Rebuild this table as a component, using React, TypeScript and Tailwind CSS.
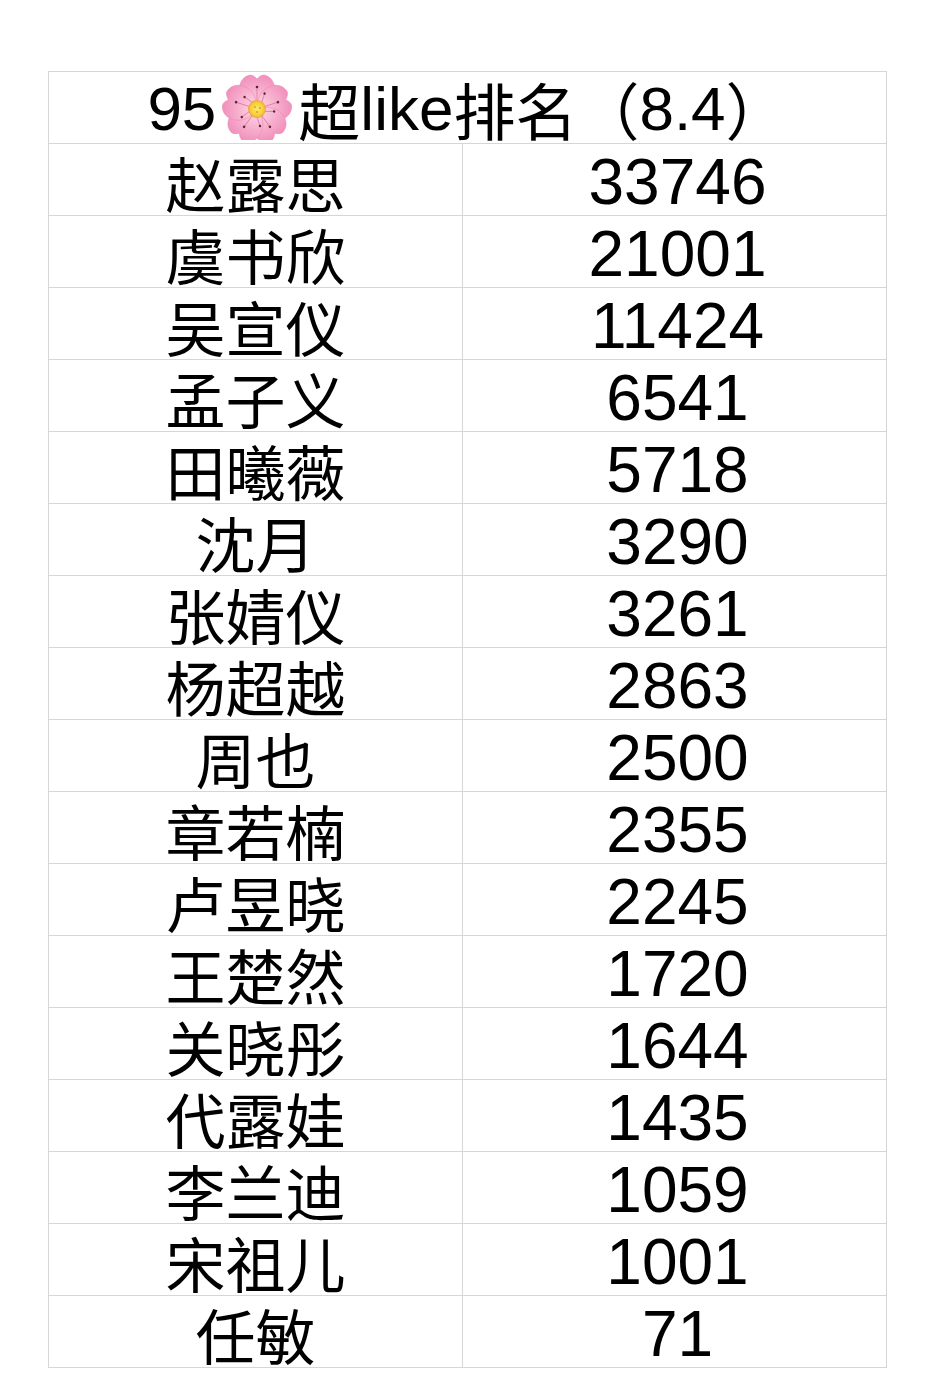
import React from "react";

const rows: [string, string][] = [
  ["赵露思", "33746"],
  ["虞书欣", "21001"],
  ["吴宣仪", "11424"],
  ["孟子义", "6541"],
  ["田曦薇", "5718"],
  ["沈月", "3290"],
  ["张婧仪", "3261"],
  ["杨超越", "2863"],
  ["周也", "2500"],
  ["章若楠", "2355"],
  ["卢昱晓", "2245"],
  ["王楚然", "1720"],
  ["关晓彤", "1644"],
  ["代露娃", "1435"],
  ["李兰迪", "1059"],
  ["宋祖儿", "1001"],
  ["任敏", "71"],
];

function Blossom() {
  const petals = [0, 72, 144, 216, 288];
  return (
    <svg width="76" height="66" viewBox="-38 -35 76 66" className="block">
      <defs>
        <radialGradient id="pg" cx="0" cy="0" r="36" gradientUnits="userSpaceOnUse">
          <stop offset="0%" stopColor="#fde0ec" />
          <stop offset="45%" stopColor="#f8b7d2" />
          <stop offset="100%" stopColor="#f08cba" />
        </radialGradient>
        <radialGradient id="cg" cx="0" cy="0" r="9" gradientUnits="userSpaceOnUse">
          <stop offset="0%" stopColor="#fbe96a" />
          <stop offset="70%" stopColor="#f6cf3a" />
          <stop offset="100%" stopColor="#eea23a" />
        </radialGradient>
      </defs>
      {petals.map((a) => (
        <g key={a} transform={`rotate(${a})`}>
          <path
            d="M0 0 C -22 -6 -22 -31 -7 -34 C -4 -34 -2 -32 0 -30 C 2 -32 4 -34 7 -34 C 22 -31 22 -6 0 0 Z"
            fill="url(#pg)"
            stroke="#ee8ab6"
            strokeWidth="0.6"
          />
        </g>
      ))}
      {petals.map((a) => (
        <g key={"s" + a} transform={`rotate(${a + 36})`}>
          <path d="M0 -8 L-3 -17" stroke="#e36b9a" strokeWidth="0.7" />
          <circle cx="-3" cy="-17" r="1.2" fill="#5a2333" />
        </g>
      ))}
      {petals.map((a) => (
        <g key={"t" + a} transform={`rotate(${a})`}>
          <path d="M0 -8 L0 -22" stroke="#e36b9a" strokeWidth="0.7" />
          <circle cx="0" cy="-22" r="1.3" fill="#5a2333" />
        </g>
      ))}
      <circle cx="0" cy="0" r="9" fill="url(#cg)" />
      <circle cx="-2" cy="-2" r="1" fill="#e9962e" />
      <circle cx="3" cy="-1" r="1" fill="#e9962e" />
      <circle cx="0" cy="3" r="1" fill="#e9962e" />
    </svg>
  );
}

export default function App() {
  return (
    <div className="w-[934px] h-[1381px] bg-white pt-[71px] pl-[48px]">
      <table
        className="border-collapse w-[838px] text-black"
        style={{ tableLayout: "fixed" }}
      >
        <colgroup>
          <col className="w-[414px]" />
          <col className="w-[424px]" />
        </colgroup>
        <tbody>
          <tr className="h-[72px]">
            <td
              colSpan={2}
              className="border border-[#d6d6d6] p-0 pt-[4px] text-center align-top text-[62px] leading-[66px] font-['Liberation_Sans','Noto_Sans_CJK_SC',sans-serif] whitespace-nowrap"
            >
              <span className="inline-flex items-center h-[66px]">
                <span>95</span>
                <span className="mx-[3px] -mt-[4px]">
                  <Blossom />
                </span>
                <span className="font-['Noto_Sans_CJK_SC',sans-serif]">超</span>
                <span>like</span>
                <span className="font-['Noto_Sans_CJK_SC',sans-serif]">排名（</span>
                <span>8.4</span>
                <span className="font-['Noto_Sans_CJK_SC',sans-serif]">）</span>
              </span>
            </td>
          </tr>
          {rows.map(([name, n]) => (
            <tr key={name} className="h-[72px]">
              <td className="border border-[#d6d6d6] p-0 pt-[6px] text-center align-top text-[60px] leading-[64px] font-['Noto_Sans_CJK_SC',sans-serif]">
                {name}
              </td>
              <td className="border border-[#d6d6d6] p-0 pt-[7px] pl-[6px] text-center align-top text-[64px] leading-[63px] font-['Liberation_Sans',sans-serif]">
                {n}
              </td>
            </tr>
          ))}
        </tbody>
      </table>
    </div>
  );
}
